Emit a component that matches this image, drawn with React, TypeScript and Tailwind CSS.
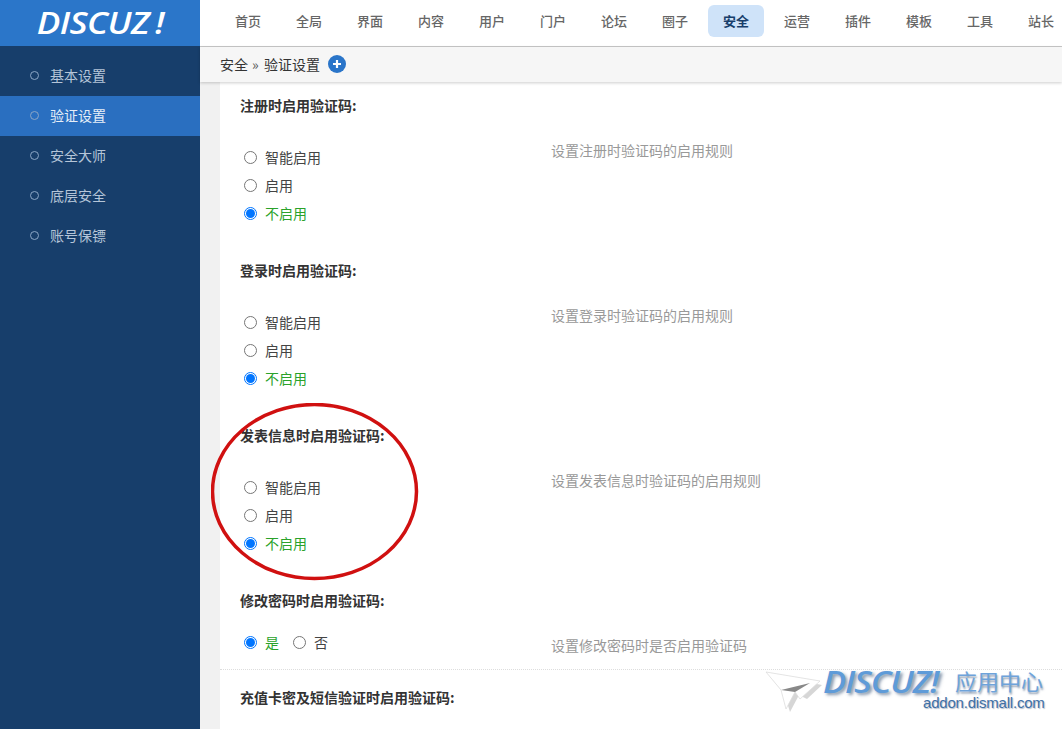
import React from "react";

const font = { fontFamily: '"Noto Sans CJK SC", "Liberation Sans", sans-serif' };

const topNav = ["首页", "全局", "界面", "内容", "用户", "门户", "论坛", "圈子", "安全", "运营", "插件", "模板", "工具", "站长"];
const sideNav = ["基本设置", "验证设置", "安全大师", "底层安全", "账号保镖"];

function Radio({ checked }: { checked?: boolean }) {
  return (
    <span
      className={
        "inline-flex h-[13px] w-[13px] shrink-0 items-center justify-center rounded-full border bg-white " +
        (checked ? "border-[#0075ff]" : "border-[#767676]")
      }
    >
      {checked && <span className="h-[9px] w-[9px] rounded-full bg-[#0075ff]" />}
    </span>
  );
}

function Option({ label, checked }: { label: string; checked?: boolean }) {
  return (
    <div className="flex h-7 items-center pb-[1px] pl-[4px]">
      <Radio checked={checked} />
      <span className={"ml-[8px] pb-[2px] text-[14px] leading-[20px] " + (checked ? "text-[#2aa22a]" : "text-[#444]")}>{label}</span>
    </div>
  );
}

function Heading({ children }: { children: React.ReactNode }) {
  return <h3 className="flex h-6 items-center pb-[2px] text-[14px] font-bold text-[#333]">{children}</h3>;
}

function Section({ title, tip }: { title: string; tip: string }) {
  return (
    <section className="pb-[31px]">
      <Heading>{title}</Heading>
      <div className="mt-[26px] flex">
        <div className="w-[311px]">
          <Option label="智能启用" />
          <Option label="启用" />
          <Option label="不启用" checked />
        </div>
        <p className="text-[14px] leading-[12px] text-[#999]">{tip}</p>
      </div>
    </section>
  );
}

export default function App() {
  return (
    <div className="relative flex h-[729px] w-[1062px] overflow-hidden bg-white" style={font}>
      <aside className="flex w-[200px] shrink-0 flex-col bg-[#173e6b]">
        <div className="flex h-[46px] items-center justify-center bg-[#2b76c9]">
          <span
            className="scale-x-[1.17] text-[30px] font-semibold italic leading-none tracking-[-0.5px] text-white"
            style={{ fontFamily: '"Open Sans", sans-serif' }}
          >
            DISCUZ<span className="ml-[5px]">!</span>
          </span>
        </div>
        <nav className="pt-[10px]">
          {sideNav.map((item, i) => (
            <div
              key={item}
              className={
                "flex h-10 items-center pb-[1px] pl-[30px] text-[14px] " +
                (i === 1 ? "bg-[#2a6fc0] text-[#e6eef8]" : "text-[#b5c5d8]")
              }
            >
              <span className="mr-[11px] h-[9px] w-[9px] rounded-full border border-[#8ba6c6]" />
              {item}
            </div>
          ))}
        </nav>
      </aside>

      <main className="flex min-w-0 flex-1 flex-col">
        <header className="flex h-[47px] shrink-0 items-start gap-[5px] border-b border-[#c8c8c8] bg-white pl-[20px] pt-[5px]">
          {topNav.map((item) => (
            <div
              key={item}
              className={
                "flex h-8 w-14 shrink-0 items-center justify-center rounded-md text-[13px] " +
                (item === "安全" ? "bg-[#cfe3f9] font-bold text-[#173e6b]" : "font-medium text-[#666]")
              }
            >
              {item}
            </div>
          ))}
        </header>
        <div className="relative z-10 flex h-[35px] shrink-0 items-center bg-[#f6f6f6] pb-[1px] pl-[20px] text-[14px] text-[#333] shadow-[0_1px_3px_rgba(0,0,0,0.2)]">
          <span>安全</span>
          <span className="mx-[4px] w-[8px] text-[#555]">»</span>
          <span>验证设置</span>
          <span className="ml-[8px] flex h-[18px] w-[18px] items-center justify-center rounded-full bg-[#2a75c9]">
            <svg width="10" height="10" viewBox="0 0 10 10">
              <path d="M5 1v8M1 5h8" stroke="#fff" strokeWidth="2.2" />
            </svg>
          </span>
        </div>
        <div className="flex min-h-0 flex-1">
          <div className="w-5 shrink-0 bg-[#f1f1f1]" />
          <div className="flex-1 pl-[20px] pt-[12px]">
            <Section title="注册时启用验证码:" tip="设置注册时验证码的启用规则" />
            <Section title="登录时启用验证码:" tip="设置登录时验证码的启用规则" />
            <Section title="发表信息时启用验证码:" tip="设置发表信息时验证码的启用规则" />
            <section className="-ml-[20px] border-b border-dotted border-[#ddd] pb-[12px] pl-[20px]">
              <Heading>修改密码时启用验证码:</Heading>
              <div className="mt-[16px] flex h-7 items-center pb-[1px]">
                <div className="flex w-[311px] items-center pl-[4px]">
                  <Radio checked />
                  <span className="ml-[8px] text-[14px] text-[#2aa22a]">是</span>
                  <span className="ml-[14px] flex items-center">
                    <Radio />
                    <span className="ml-[8px] text-[14px] text-[#444]">否</span>
                  </span>
                </div>
                <p className="relative top-[3px] text-[14px] text-[#999]">设置修改密码时是否启用验证码</p>
              </div>
            </section>
            <div className="mt-[16px]">
              <Heading>充值卡密及短信验证时启用验证码:</Heading>
            </div>
          </div>
        </div>
      </main>

      <svg className="absolute left-[211px] top-[403px]" width="208" height="179" viewBox="0 0 208 179">
        <ellipse cx="103.5" cy="88.5" rx="102" ry="87" fill="none" stroke="#d01010" strokeWidth="3.5" />
      </svg>

      <div className="absolute left-[765px] top-[667px] h-[46px] w-[285px]">
        <svg className="absolute left-0 top-[3px]" width="58" height="44" viewBox="0 0 58 44">
          <path d="M2 3 L55 13 L40 27 L32 23 L23 40 L17 21 Z" fill="#bbb" opacity="0.6" transform="translate(2 2)" />
          <path d="M1 2 L55 11 L35 29 L30 22 L21 39 L16 20 Z" fill="#fff" stroke="#ddd" strokeWidth="0.8" />
          <path d="M16 20 L45 13 L30 22 Z" fill="#888" />
        </svg>
        <span
          className="absolute left-[58px] top-[-2px] origin-left scale-x-[1.15] text-[30px] font-semibold italic leading-[34px] tracking-[-1px] text-[#5f9bd8]"
          style={{ fontFamily: '"Open Sans", sans-serif', textShadow: "2px 2px 3px rgba(30,60,100,.55)" }}
        >
          DISCUZ!
        </span>
        <span
          className="absolute left-[190px] top-[-2px] text-[22px] leading-[30px] text-[#6ea3da]"
          style={{ textShadow: "1px 2px 2px rgba(30,60,100,.5)" }}
        >
          应用中心
        </span>
        <span
          className="absolute left-[158px] top-[27px] text-[15px] leading-[18px] tracking-[-0.2px] text-[#3f6fa5]"
          style={{ fontFamily: '"Liberation Sans", sans-serif', textShadow: "1px 1px 1px rgba(30,60,100,.35)" }}
        >
          addon.dismall.com
        </span>
      </div>
    </div>
  );
}
